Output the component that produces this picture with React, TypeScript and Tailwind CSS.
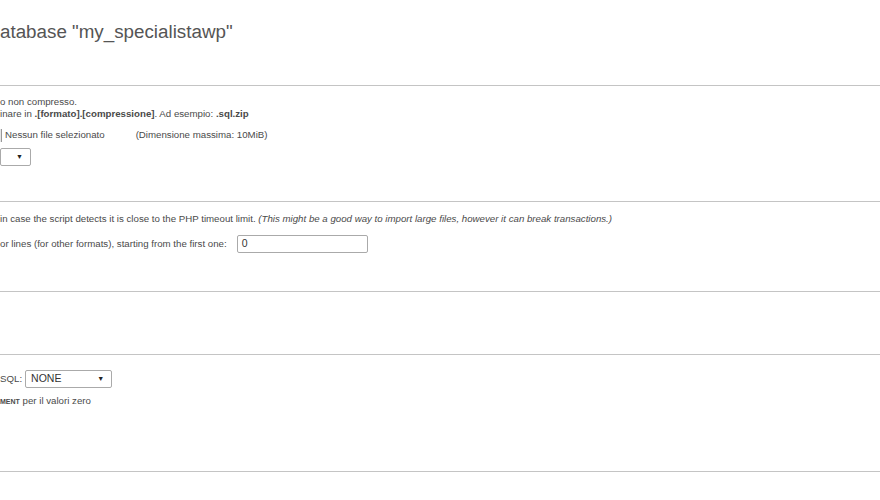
import React from 'react';

const Select: React.FC<{ value?: string; width: string }> = ({ value, width }) => (
  <div className={`flex h-[18px] items-center justify-between rounded-[2px] border border-[#aaa] bg-white pl-[5px] pr-[7px] ${width}`}>
    <span className="text-[10.5px] text-[#333]">{value}</span>
    <span className="text-[7px] text-[#222]">▼</span>
  </div>
);

const Rule: React.FC = () => <div className="h-px w-full bg-[#c4c4c4]" />;

const App: React.FC = () => {
  return (
    <div className="h-[500px] w-[880px] overflow-hidden bg-white font-['Liberation_Sans',Arial,sans-serif] text-[9.7px] text-[#4a4a4a]">
      {/* header */}
      <div className="h-[85px] pt-[20px]">
        <h2 className="text-[18.8px] leading-[24px] text-[#555]">atabase "my_specialistawp"</h2>
      </div>
      <Rule />

      {/* file to import */}
      <div className="h-[115px] pt-[10px]">
        <p className="leading-[12px]">o non compresso.</p>
        <p className="leading-[12px]">
          inare in <b>.[formato].[compressione]</b>. Ad esempio: <b>.sql.zip</b>
        </p>
        <div className="mt-[8px] flex h-[14px] items-center">
          <div className="h-[13px] w-[2px] border-r border-[#999] bg-[#e6e6e6]" />
          <span className="ml-[3px]">Nessun file selezionato</span>
          <span className="ml-[31px]">(Dimensione massima: 10MiB)</span>
        </div>
        <div className="mt-[6px]">
          <Select width="w-[31px]" />
        </div>
      </div>
      <Rule />

      {/* partial import */}
      <div className="h-[89px] pt-[11px]">
        <p className="leading-[12px]">
          in case the script detects it is close to the PHP timeout limit.{' '}
          <i>(This might be a good way to import large files, however it can break transactions.)</i>
        </p>
        <div className="mt-[10px] flex items-center">
          <span>or lines (for other formats), starting from the first one:</span>
          <div className="ml-[10px] flex h-[18px] w-[131px] items-center rounded-[2px] border border-[#aaa] bg-white pl-[4px] text-[10.5px] text-[#333]">
            0
          </div>
        </div>
      </div>
      <Rule />

      {/* empty section */}
      <div className="h-[62px]" />
      <Rule />

      {/* format options */}
      <div className="h-[116px] pt-[15px]">
        <div className="flex items-center">
          <span>SQL:</span>
          <div className="ml-[3px]">
            <Select value="NONE" width="w-[87px]" />
          </div>
        </div>
        <p className="mt-[7px] leading-[12px]">
          <span className="text-[7px] font-bold">MENT</span> per il valori zero
        </p>
      </div>
      <Rule />
    </div>
  );
};

export default App;
